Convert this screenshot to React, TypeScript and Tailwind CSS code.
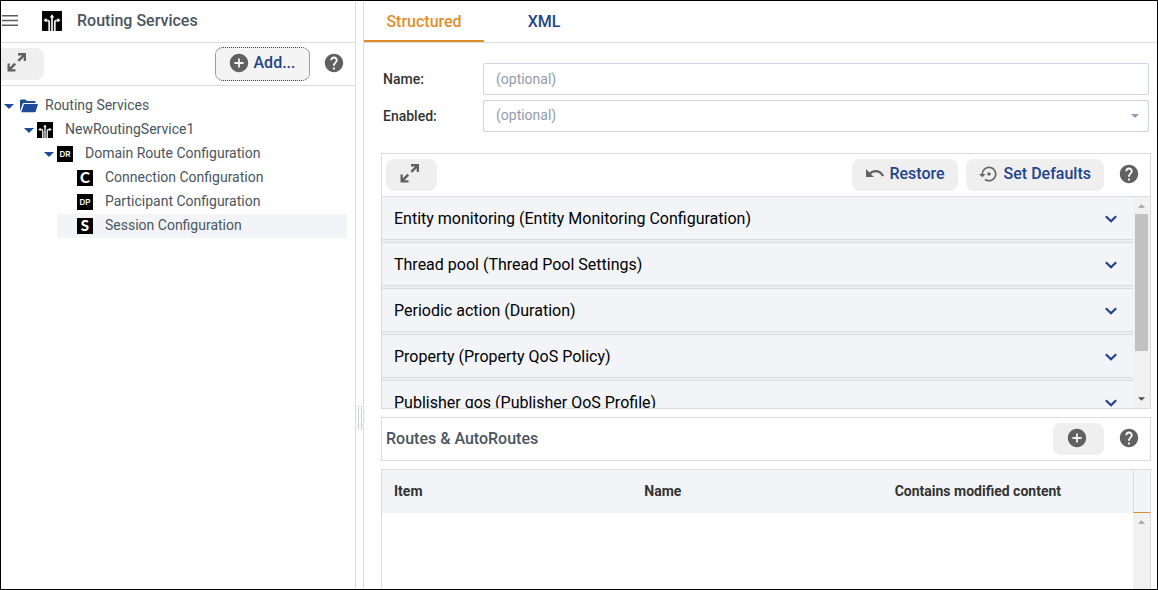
import { useState } from "react";
import type { ReactNode } from "react";
import { MdAddCircle, MdHelp, MdSettingsBackupRestore } from "react-icons/md";

const settings = [
  "Entity monitoring (Entity Monitoring Configuration)",
  "Thread pool (Thread Pool Settings)",
  "Periodic action (Duration)",
  "Property (Property QoS Policy)",
  "Publisher qos (Publisher QoS Profile)",
];

function MenuIcon() {
  return (
    <svg className="h-[11px] w-4" viewBox="0 0 16 11" fill="#5c5c5c" aria-hidden="true">
      <path d="M0 0h16v1.500H0zM0 4.700h16v1.500H0zM0 9.400h16v1.500H0z" />
    </svg>
  );
}

function ExpandIcon() {
  return (
    <svg className="h-5 w-5" viewBox="0 0 20 20" fill="#616161" aria-hidden="true">
      <path d="M11 0h8v8h-2.300V4.200l-4.500 4.500-1.800-1.800L15 2.400h-4z" />
      <path d="M8.500 18.500H.5v-8h2.300v3.700l4.500-4.500 1.800 1.800L4.500 16.200h4z" />
    </svg>
  );
}

function UndoIcon() {
  return (
    <svg className="h-[18px] w-[18px]" viewBox="0 0 18 18" fill="#616161" aria-hidden="true">
      <path d="M0 4v8h8L5 9.200C6.400 8 8 7.300 9.800 7.300c2.800 0 5.100 1.600 6.200 4.200l2-.7C16.600 7.300 13.500 5 9.800 5 7.400 5 5.100 5.900 3.400 7.400z" />
    </svg>
  );
}

function ChevronIcon() {
  return (
    <svg className="h-5 w-5 shrink-0" viewBox="0 0 20 20" fill="none" aria-hidden="true">
      <path d="M4.800 7.300l5.200 5 5.200-5" stroke="#1f438c" strokeWidth="2.200" />
    </svg>
  );
}

function RoutingIcon({ className }: { className: string }) {
  return (
    <svg className={className} viewBox="0 0 20 20" aria-hidden="true">
      <path d="M0 0h20v20H0z" fill="#000" />
      <g fill="none" stroke="#e8e8e8" strokeWidth="1.800">
        <path d="M10 20V5.500" />
        <path d="M7.200 20v-8.500Q7.200 9.300 5 9.300H3.500" />
        <path d="M12.800 20v-8.500Q12.800 9.300 15 9.300h1.500" />
      </g>
      <path d="M10 3.200l2.200 3.300H7.800zM1.600 9.300l2.900-2.200v4.400zM18.400 9.300l-2.900-2.200v4.400z" fill="#fff" />
    </svg>
  );
}

function FolderIcon() {
  return (
    <svg className="h-[14px] w-[18px]" viewBox="0 0 18 14" fill="#1f4a96" aria-hidden="true">
      <path d="M0 12V1.500Q0 .5 1 .5h4.500l1.500 1.500h7.500q1 0 1 1V4H4Q3 4 2.600 5z" />
      <path d="M4 5h14l-2.300 7.500q-.2.8-1.200.8H1.200z" />
    </svg>
  );
}

function Caret({ className }: { className: string }) {
  return (
    <svg className={className} viewBox="0 0 10 5" fill="currentColor" aria-hidden="true">
      <path d="M0 0h10L5 5z" />
    </svg>
  );
}

function Badge({ children, small }: { children: string; small?: boolean }) {
  return (
    <span
      aria-hidden="true"
      className={`flex h-4 w-4 items-center justify-center bg-black leading-none text-white ${
        small ? "font-[Inter] text-[8px] font-semibold" : "pb-[2px] font-[Lato] text-[15px] font-black"
      }`}
    >
      {children}
    </span>
  );
}

const tree = [
  { label: "Routing Services", indent: "pl-[2px]", icon: <FolderIcon />, iconBox: "ml-[5px] w-[25px]", open: true },
  { label: "NewRoutingService1", indent: "pl-[22px]", icon: <RoutingIcon className="h-4 w-4" />, iconBox: "ml-[2px] w-7", open: true },
  { label: "Domain Route Configuration", indent: "pl-[42px]", icon: <Badge small>DR</Badge>, iconBox: "ml-[2px] w-7", open: true },
  { label: "Connection Configuration", indent: "ml-14 pl-5", icon: <Badge>C</Badge>, iconBox: "w-7" },
  { label: "Participant Configuration", indent: "ml-14 pl-5", icon: <Badge small>DP</Badge>, iconBox: "w-7" },
  { label: "Session Configuration", indent: "ml-14 pl-5", icon: <Badge>S</Badge>, iconBox: "w-7" },
];

function HelpButton() {
  return (
    <button type="button" aria-label="Help" className="shrink-0 pb-[2px] text-[#616161]">
      <MdHelp className="h-[22px] w-[22px]" />
    </button>
  );
}

function ToolButton({ label, className, children }: { label?: string; className: string; children: ReactNode }) {
  return (
    <button
      type="button"
      aria-label={label}
      className={`flex h-8 shrink-0 items-center rounded-lg bg-[#efefef] pb-[2px] font-medium text-[#1f438c] ${className}`}
    >
      {children}
    </button>
  );
}

function ScrollTrack({ children }: { children?: ReactNode }) {
  return (
    <div className="flex w-[17px] shrink-0 flex-col items-center bg-[#f1f1f1]" aria-hidden="true">
      <Caret className="mt-[7px] h-1 w-[7px] shrink-0 rotate-180 text-[#a3a3a3]" />
      {children}
    </div>
  );
}

function Sidebar() {
  const [selected, setSelected] = useState("Session Configuration");

  return (
    <aside className="flex w-[355px] shrink-0 flex-col border-r border-[#dadce0]">
      <header className="flex h-[42px] shrink-0 items-center border-b border-[#dadce0] pb-[2px]">
        <button type="button" aria-label="Menu" className="pl-px">
          <MenuIcon />
        </button>
        <RoutingIcon className="ml-6 h-5 w-5" />
        <h1 className="ml-[15px] text-[16px] font-medium text-[#4a5560]">Routing Services</h1>
      </header>

      <div className="flex h-[43px] shrink-0 items-center justify-between border-b border-[#dadce0] pr-[10px]">
        <ToolButton label="Expand tree" className="w-[43px] rounded-l-none pl-[6px]">
          <ExpandIcon />
        </ToolButton>
        <div className="flex items-center gap-[13px]">
          <button
            type="button"
            className="flex h-[34px] w-[95px] items-center justify-center gap-1 rounded-lg border border-dotted border-[#444] bg-[#f4f4f4] pb-[2px] pr-[2px] text-[16px] font-medium text-[#1f438c]"
          >
            <MdAddCircle className="h-[22px] w-[22px] text-[#616161]" />
            Add...
          </button>
          <HelpButton />
        </div>
      </div>

      <ul className="flex flex-col pr-2 pt-2">
        {tree.map((node) => (
          <li
            key={node.label}
            className={`flex h-6 items-center ${node.indent} ${node.label === selected ? "bg-[#f2f4f8]" : ""}`}
          >
            {node.open && <Caret className="mx-px h-[5px] w-[10px] shrink-0 text-[#1f4a96]" />}
            <button type="button" className="flex items-center" onClick={() => setSelected(node.label)}>
              <span className={`flex ${node.iconBox}`}>{node.icon}</span>
              <span className="pb-[2px] text-[14px] text-[#4a5560]">{node.label}</span>
            </button>
          </li>
        ))}
      </ul>
    </aside>
  );
}

function GeneralForm() {
  return (
    <form className="flex flex-col gap-[5px] pl-[19px] pr-2 pt-5 text-[14px]">
      <div className="flex items-center">
        <label htmlFor="name" className="w-[100px] shrink-0 font-medium text-[#333]">
          Name:
        </label>
        <input
          id="name"
          placeholder="(optional)"
          className="h-8 min-w-0 flex-1 rounded-xs border border-[#cbd5e7] px-3 placeholder:text-[#939bab]"
        />
      </div>
      <div className="flex items-center">
        <label htmlFor="enabled" className="w-[100px] shrink-0 font-medium text-[#333]">
          Enabled:
        </label>
        <div className="relative flex-1">
          <select
            id="enabled"
            className="block h-8 w-full appearance-none rounded-xs border border-[#cbd5e7] bg-white px-3 pb-[2px] text-[#939bab]"
          >
            <option>(optional)</option>
            <option>true</option>
            <option>false</option>
          </select>
          <Caret className="pointer-events-none absolute right-[10px] top-[14px] h-1 w-2 text-[#8f9db8]" />
        </div>
      </div>
    </form>
  );
}

function SettingsPanel() {
  return (
    <section className="flex h-64 shrink-0 flex-col border border-[#dadce0]">
      <div className="flex h-[43px] shrink-0 items-center border-b border-[#dadce0] pl-1 pr-[10px]">
        <ToolButton label="Expand settings" className="w-[51px] justify-center pr-[3px]">
          <ExpandIcon />
        </ToolButton>
        <ToolButton className="ml-auto gap-[5px] pl-[14px] pr-[13px]">
          <UndoIcon />
          Restore
        </ToolButton>
        <ToolButton className="ml-2 mr-[14px] gap-[5px] px-[13px]">
          <MdSettingsBackupRestore className="h-5 w-5 text-[#666]" />
          Set Defaults
        </ToolButton>
        <HelpButton />
      </div>
      <div className="flex min-h-0 flex-1">
        <div className="-mt-px flex min-w-0 flex-1 flex-col gap-[2px] overflow-y-hidden bg-[#eceef2]">
          {settings.map((title) => (
            <button
              key={title}
              type="button"
              className="flex h-11 shrink-0 items-center justify-between border-y border-[#dadce0] bg-[#f2f4f8] px-3 pt-[2px] text-left text-[16px] text-black"
            >
              {title}
              <ChevronIcon />
            </button>
          ))}
        </div>
        <ScrollTrack>
          <div className="mt-[6px] h-[137px] w-[13px] bg-[#c1c1c1]" />
          <Caret className="mb-[7px] mt-auto h-1 w-[7px] shrink-0 text-[#505050]" />
        </ScrollTrack>
      </div>
    </section>
  );
}

function Routes() {
  return (
    <>
      <section className="mt-2 flex h-11 shrink-0 items-center border border-[#dadce0] pl-1 pr-[10px]">
        <h2 className="text-[16px] font-medium text-[#4a5560]">Routes &amp; AutoRoutes</h2>
        <ToolButton label="Add route" className="ml-auto mr-[14px] w-[51px] justify-center pr-[3px]">
          <MdAddCircle className="h-[22px] w-[22px] text-[#616161]" />
        </ToolButton>
        <HelpButton />
      </section>
      <section className="mt-2 flex min-h-0 flex-1 flex-col border border-b-0 border-[#dadce0]">
        <div className="flex bg-[#f2f4f8]">
          <table className="flex-1 table-fixed text-left text-[14px] font-bold text-[#333]">
            <thead>
              <tr className="h-[43px]">
                <th className="w-1/3 px-3">Item</th>
                <th className="w-1/3 px-3">Name</th>
                <th className="w-1/3 px-3">Contains modified content</th>
              </tr>
            </thead>
          </table>
          <div className="w-[17px] border-b border-l border-b-[#e08e2b] border-l-[#dadce0]" />
        </div>
        <div className="flex flex-1 justify-end">
          <ScrollTrack />
        </div>
      </section>
    </>
  );
}

export default function App() {
  const [tab, setTab] = useState("Structured");

  return (
    <div className="flex h-screen overflow-hidden border border-black bg-white font-[Roboto,sans-serif] text-[16px]">
      <Sidebar />
      <div className="flex w-[7px] shrink-0 justify-center pt-[405px]">
        <svg className="h-6 w-1" viewBox="0 0 4 24" aria-hidden="true">
          <path d="M.5 0v24M3.500 0v24" stroke="#8fb4d4" strokeDasharray="1 1" />
        </svg>
      </div>
      <main className="flex min-w-0 flex-1 flex-col border-l border-[#dadce0]">
        <nav className="flex h-[42px] shrink-0 border-b border-[#dadce0]" role="tablist">
          {["Structured", "XML"].map((name) => (
            <button
              key={name}
              type="button"
              role="tab"
              aria-selected={tab === name}
              onClick={() => setTab(name)}
              className={`w-[120px] border-b-2 pt-[2px] font-medium ${
                tab === name ? "border-[#e08e2b] text-[#e08e2b]" : "border-transparent text-[#1f438c]"
              }`}
            >
              {name}
            </button>
          ))}
        </nav>
        <GeneralForm />
        <div className="flex min-h-0 flex-1 flex-col pl-[17px] pr-[6px] pt-[21px]">
          <SettingsPanel />
          <Routes />
        </div>
      </main>
    </div>
  );
}
